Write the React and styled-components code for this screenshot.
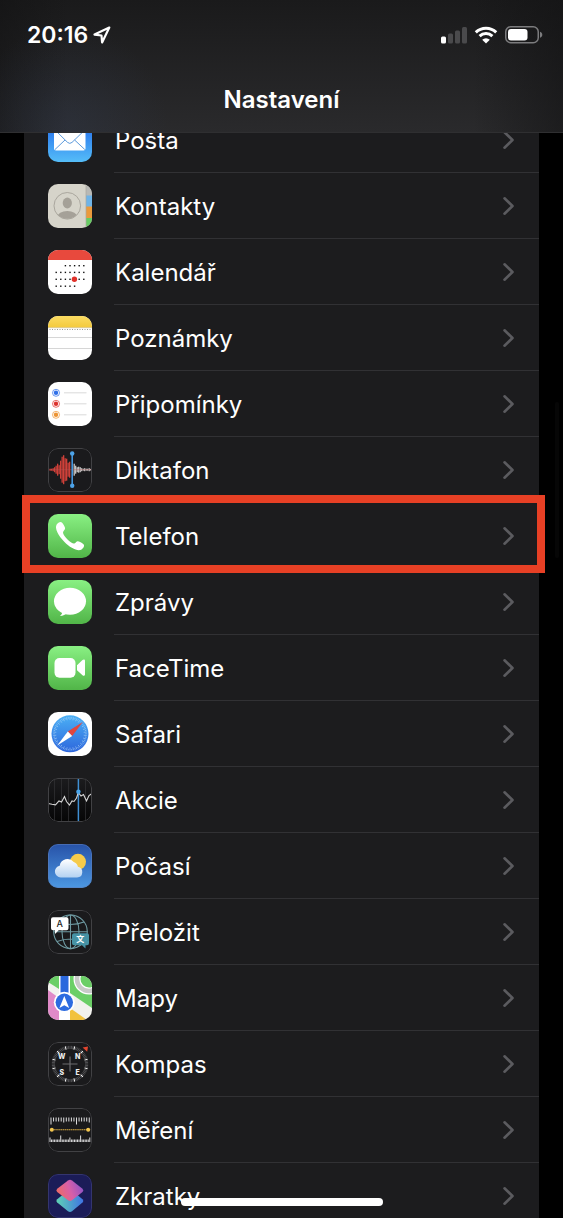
import React from "react";
import styled, { createGlobalStyle } from "styled-components";

const GlobalStyle = createGlobalStyle`
  * {
    box-sizing: border-box;
  }

  body {
    margin: 0;
    background: #000;
    color: #fff;
    font-family: Inter, "Liberation Sans", sans-serif;
  }
`;

const Screen = styled.div`
  position: relative;
  height: 100vh;
  display: flex;
  flex-direction: column;
  overflow: hidden;
  background: #000;
`;

const Header = styled.header`
  position: relative;
  z-index: 2;
  flex: none;
  border-bottom: 1px solid #2f2f31;
  background:
    radial-gradient(circle at 12% 95%, rgba(50, 62, 86, 0.3), transparent 100px),
    linear-gradient(90deg, rgba(18, 18, 19, 0.55), transparent 12%, transparent 84%, rgba(18, 18, 19, 0.55)),
    linear-gradient(#1a1a1b, #2a2a2c);
`;

const StatusBar = styled.div`
  display: flex;
  align-items: center;
  justify-content: space-between;
  height: 70px;
  padding: 0 20px 0 27px;
`;

const StatusGroup = styled.div`
  display: flex;
  align-items: center;
  gap: ${(p) => p.$gap}px;
`;

const Time = styled.time`
  font-size: 23px;
  line-height: 28px;
  font-weight: 600;
`;

const Title = styled.h1`
  margin: 0;
  padding: 13px 0 15px;
  font-size: 24px;
  line-height: 34px;
  font-weight: 600;
  text-align: center;
`;

const Content = styled.main`
  flex: 1;
  min-height: 0;
  padding: 0 24px;
`;

const List = styled.ul`
  list-style: none;
  margin: -26px 0 0;
  padding: 0;
  background: #1c1c1e;
`;

const Item = styled.li`
  position: relative;
`;

const Highlight = styled.div`
  position: absolute;
  z-index: 1;
  top: -8px;
  right: -6px;
  bottom: -4px;
  left: -2px;
  border: 8px solid #e84025;
  pointer-events: none;
`;

const RowLink = styled.a`
  display: flex;
  align-items: center;
  gap: 22px;
  height: 66px;
  padding-left: 24px;
  color: inherit;
  text-decoration: none;
`;

const AppIcon = styled.svg`
  flex: none;
  width: 44px;
  height: 44px;
  border-radius: 10px;
`;

const RowBody = styled.div`
  flex: 1;
  align-self: stretch;
  display: flex;
  align-items: center;
  justify-content: space-between;
  padding-right: 24px;
  border-bottom: 1px solid #313134;
`;

const Label = styled.span`
  padding: 2px 0 0 1px;
  font-size: 24px;
  line-height: 32px;
`;

const ScrollThumb = styled.div`
  position: absolute;
  top: 402px;
  right: 4px;
  width: 4px;
  height: 156px;
  border-radius: 2px;
  background: #060606;
`;

const HomeIndicator = styled.div`
  position: absolute;
  z-index: 3;
  bottom: 12px;
  left: 50%;
  width: 202px;
  height: 8px;
  border-radius: 4px;
  background: #fff;
  transform: translateX(-50%);
`;

const range = (n) => Array.from({ length: n }, (_, i) => i);

const Gradient = ({ id, from, to }) => (
  <linearGradient id={id} x1="0" y1="0" x2="0" y2="1">
    <stop offset="0" stopColor={from} />
    <stop offset="1" stopColor={to} />
  </linearGradient>
);

const Fill = ({ color }) => <rect width="44" height="44" fill={color} />;

const DarkTile = ({ children }) => (
  <>
    <Fill color="#1a1a1c" />
    {children}
    <rect x="0.5" y="0.5" width="43" height="43" rx="9.5" fill="none" stroke="#414144" />
  </>
);

const Mail = () => (
  <>
    <Gradient id="mail" from="#1d62ea" to="#55bdf8" />
    <Fill color="url(#mail)" />
    <rect x="6" y="11" width="31.5" height="21.5" rx="2" fill="#fff" />
    <path d="M7 12l12.6 12.4q2.2 2 4.4 0L36.8 12M7 31.5l10-9.5M36.8 31.5L26.6 22" fill="none" stroke="#4a8ed8" strokeWidth="0.9" />
  </>
);

const Contacts = () => (
  <>
    <Fill color="#d6d4ca" />
    <rect x="38" width="6" height="12" fill="#b9b9b5" />
    <rect x="38" y="11.5" width="6" height="11.5" fill="#6fb4e8" />
    <rect x="38" y="22.5" width="6" height="11.5" fill="#ea9a3c" />
    <rect x="38" y="34" width="6" height="10" fill="#67cc63" />
    <path d="M38 0v44" stroke="#a9a79e" strokeWidth="0.7" />
    <clipPath id="face"><circle cx="19.3" cy="21.8" r="13" /></clipPath>
    <g clipPath="url(#face)" fill="#a5a198">
      <ellipse cx="19.3" cy="19" rx="4.6" ry="5.4" />
      <ellipse cx="19.3" cy="33" rx="10" ry="6" />
    </g>
    <circle cx="19.3" cy="21.8" r="13.3" fill="none" stroke="#a5a198" strokeWidth="0.9" />
  </>
);

const calendarWeeks = [
  { y: 15.7, days: [2, 3, 4, 5, 6] },
  { y: 22.4, days: [0, 1, 2, 3, 4, 5, 6] },
  { y: 29.3, days: [0, 1, 2, 3, 5, 6] },
  { y: 36.2, days: [0, 1, 2, 3, 4] },
];

const Calendar = () => (
  <>
    <Fill color="#fff" />
    <rect width="44" height="10" fill="#e8493d" />
    {calendarWeeks.map((week) =>
      week.days.map((day) => (
        <rect key={`${week.y}-${day}`} x={7.5 + day * 4.6} y={week.y - 0.7} width="1.4" height="1.4" fill="#111" />
      ))
    )}
    <circle cx="26.4" cy="29.3" r="2.7" fill="#e0322a" />
  </>
);

const Notes = () => (
  <>
    <Gradient id="notes" from="#fbdc63" to="#f4ca3d" />
    <Fill color="#fff" />
    <rect width="44" height="11.5" fill="url(#notes)" />
    <path d="M0 11.7h44" stroke="#c9b676" strokeWidth="0.6" />
    <path d="M1.5 13.5h42" stroke="#999" strokeWidth="1" strokeDasharray="1 1.5" />
    <path d="M0 21.5h44M0 32.5h44" stroke="#cbcbcb" strokeWidth="0.8" />
  </>
);

const Reminders = () => (
  <>
    <Fill color="#fff" />
    {["#2f6fe8", "#dc322d", "#ec9434"].map((color, i) => (
      <g key={color} transform={`translate(8 ${10.8 + i * 11})`}>
        <circle r="3.5" fill="none" stroke={color} strokeWidth="0.7" />
        <circle r="2.2" fill={color} />
        <path d="M8 0h22.5" stroke="#cfcfcf" strokeWidth="0.8" />
      </g>
    ))}
  </>
);

const redBars = [1, 1, 1.5, 2.5, 4, 6, 4.5, 9, 13, 14.5, 11.5, 11, 7, 8];
const whiteBars = [6, 4, 2.5, 3, 2.5, 1.5, 1, 1.5, 1, 1, 1.5, 0.8];

const VoiceMemos = () => (
  <DarkTile>
    {redBars.map((h, i) => (
      <rect key={i} x={1.5 + i * 1.5} y={21.7 - h} width="1.3" height={h * 2} fill="#cf4039" />
    ))}
    {whiteBars.map((h, i) => (
      <rect key={i} x={25.6 + i * 1.5} y={21.7 - h} width="1.2" height={h * 2} fill="#d5d5d5" />
    ))}
    <path d="M1 21.7h42" stroke="#b55" strokeWidth="0.4" />
    <path d="M24.2 5.5v32" stroke="#4597dd" strokeWidth="1.6" />
    <circle cx="24.2" cy="5.5" r="2.2" fill="#4da3e8" />
    <circle cx="24.2" cy="37.8" r="2.2" fill="#4da3e8" />
  </DarkTile>
);

const GreenTile = ({ id, children }) => (
  <>
    <Gradient id={id} from="#89f083" to="#51b548" />
    <Fill color={`url(#${id})`} />
    {children}
  </>
);

const Phone = () => (
  <GreenTile id="phone">
    <path
      d="M8.8 10.3C10 8.4 12.6 7.2 13.9 8.5c1.4 1.5 2.8 3.9 3.2 5.4.4 1.7-2.2 3-2.1 4.6.1 2 2.800 5.400 5.300 7.700 2.200 1.900 4.400 3.500 6 3.200 1.500-.3 2.100-2.500 3.700-2.200 1.900.4 4.600 1.900 5.700 3.300 1.100 1.400-.5 4.100-2.600 5.200-3.600 1.700-11.100-1.700-16.600-7.600C10.500 21.700 6.100 14.400 8.800 10.300z"
      fill="#fff"
    />
  </GreenTile>
);

const Messages = () => (
  <GreenTile id="messages">
    <ellipse cx="22" cy="21.2" rx="16" ry="13.5" fill="#fff" />
    <path d="M14.5 30.500c.2 2.300-.8 4.100-2.700 5.600 3.200-.1 6-1.300 7.700-3.300z" fill="#fff" />
  </GreenTile>
);

const FaceTime = () => (
  <GreenTile id="facetime">
    <rect x="6.5" y="12" width="21" height="19.8" rx="5" fill="#fff" />
    <path d="M29 19.300l5.500-5.200c1.100-1 2.500-.7 2.500.9v13.300c0 1.600-1.400 1.900-2.500.9L29 24.300z" fill="#fff" />
  </GreenTile>
);

const Safari = () => (
  <>
    <Gradient id="safari" from="#4bb0f5" to="#2d66dc" />
    <Fill color="#fff" />
    <circle cx="22" cy="21.8" r="18.5" fill="url(#safari)" />
    {range(60).map((i) => (
      <path
        key={i}
        d={i % 2 ? "M22 5v1.6" : "M22 5v3"}
        transform={`rotate(${i * 6} 22 21.8)`}
        stroke="#b6dcfa"
        strokeWidth="0.5"
      />
    ))}
    <path d="M34.8 10L24.2 24 19.8 19.6z" fill="#e0463f" />
    <path d="M9.2 33.5L19.8 19.6 24.2 24z" fill="#fff" />
  </>
);

const Stocks = () => (
  <DarkTile>
    <Gradient id="stocks" from="#1c1c1e" to="#060606" />
    <Fill color="url(#stocks)" />
    <path d="M6.5 0v44M13.5 0v44M20.5 0v44M37.5 0v44" stroke="#303032" strokeWidth="0.8" />
    <path d="M30.4 0v44" stroke="#3f8fd2" strokeWidth="1.5" />
    <path
      d="M0 25.5L4 26.3 7.5 26.900 11 23 13.500 24 16.500 18.500 18.500 23.500 21.500 27 24 23 26 23.500 28.500 20 30.400 14.500 33 18 35.500 16.500 38.500 23 41 17.500 44 15.500"
      fill="none"
      stroke="#d6d6d6"
      strokeWidth="1.1"
    />
    <circle cx="30.4" cy="13.8" r="2.2" fill="#4aa6ec" />
  </DarkTile>
);

const Weather = () => (
  <>
    <Gradient id="sky" from="#2752a8" to="#4c98e2" />
    <Gradient id="cloud" from="#fff" to="#b4d2f2" />
    <Fill color="url(#sky)" />
    <circle cx="30" cy="17.8" r="8" fill="#f6cb4b" />
    <path
      d="M12.700 33.400a5.900 5.900 0 0 1-1-11.700 7.900 7.900 0 0 1 14-3.600 6.200 6.200 0 0 1 4.200 4.600 5.400 5.400 0 0 1-.8 10.700z"
      fill="url(#cloud)"
    />
    <rect x="0.5" y="0.5" width="43" height="43" rx="9.5" fill="none" stroke="#5c7dbb" strokeOpacity="0.6" />
  </>
);

const Translate = () => (
  <DarkTile>
    <g fill="none" stroke="#6f9ba3" strokeWidth="1.1">
      <circle cx="22.5" cy="21.8" r="16.8" />
      <ellipse cx="22.5" cy="21.8" rx="8.5" ry="16.8" />
      <path d="M22.5 5v34M5.700 21.800h33.600M9 12q13.500 5 27 0M9 31.500q13.500-5 27 0" />
    </g>
    <path d="M5 7.300h13.500a2 2 0 0 1 2 2v9a2 2 0 0 1-2 2h-7.800L7 24v-3.700H5a2 2 0 0 1-2-2v-9a2 2 0 0 1 2-2z" fill="#fff" />
    <path d="M26 23.200h13a2 2 0 0 1 2 2v8a2 2 0 0 1-2 2h-1.500v3.300l-3.500-3.300h-8a2 2 0 0 1-2-2v-8a2 2 0 0 1 2-2z" fill="#4692a4" />
    <text x="11.7" y="17" fontSize="9" fontWeight="500" textAnchor="middle" fill="#222">A</text>
    <text x="32.3" y="32.2" fontSize="8" fontWeight="700" textAnchor="middle" fill="#fff" fontFamily='"Noto Sans CJK SC", sans-serif'>文</text>
  </DarkTile>
);

const Maps = () => (
  <>
    <Fill color="#f2f2ee" />
    <path d="M0 0h11v13L0 6z" fill="#6bcf67" />
    <path d="M22 0h22v32L22 17z" fill="#6bcf67" />
    <path d="M0 14l11 8v22H0z" fill="#e08ac8" />
    <path d="M22 32l17 12H22z" fill="#f2c23d" />
    <circle cx="41" cy="3" r="12" fill="none" stroke="#fff" strokeWidth="7" />
    <circle cx="41" cy="3" r="12" fill="none" stroke="#c8cac8" strokeWidth="4.5" />
    <path d="M11 0h11v44h-11z" fill="#fff" />
    <path d="M12.500 0h8v26h-8z" fill="#2b68dd" />
    <circle cx="16.3" cy="26.3" r="10.5" fill="#fff" />
    <circle cx="16.3" cy="26.3" r="8.7" fill="#2c6be0" />
    <path d="M16.300 20l4.900 12-4.900-2.800-4.900 2.800z" fill="#fff" />
  </>
);

const compassLetters = [
  { name: "W", x: 13.7, y: 16.5 },
  { name: "N", x: 29.7, y: 16.5 },
  { name: "S", x: 13.7, y: 33 },
  { name: "E", x: 29.7, y: 33 },
];

const Compass = () => (
  <DarkTile>
    {range(72).map((i) => (
      <path
        key={i}
        d="M22 3.8v3.2"
        transform={`rotate(${i * 5} 22 22)`}
        stroke={i % 6 === 3 ? "#fff" : "#808083"}
        strokeWidth={i % 6 === 3 ? 1 : 0.5}
      />
    ))}
    <path d="M22 14.500v15M14.500 22h15" stroke="#6c6c6f" strokeWidth="1.2" />
    {compassLetters.map((l) => (
      <text key={l.name} x={l.x} y={l.y} fontSize="7" fontWeight="800" textAnchor="middle" fill="#eee">
        {l.name}
      </text>
    ))}
    <path d="M40 4.500l-.8 5.200-4.600-4.200z" fill="#e2452f" />
  </DarkTile>
);

const Measure = () => (
  <DarkTile>
    {range(16).map((i) => (
      <rect key={i} x={2.5 + i * 2.55} y="9.5" width="1" height={i % 10 === 0 ? 7 : i % 5 === 0 ? 5 : 4} fill="#dededf" />
    ))}
    {range(27).map((i) => (
      <rect
        key={i}
        x={1.5 + i * 1.53}
        y={i % 13 === 7 ? 27.5 : i % 13 === 0 ? 29.5 : 31.5}
        width="1"
        height={i % 13 === 7 ? 6.5 : i % 13 === 0 ? 4.5 : 2.5}
        fill="#dededf"
      />
    ))}
    <path d="M4 21.700h36" stroke="#dcae43" strokeWidth="1.1" strokeDasharray="1.6 0.5" />
    <circle cx="3.8" cy="21.7" r="2" fill="#f3c650" />
    <circle cx="40.2" cy="21.7" r="2" fill="#f3c650" />
  </DarkTile>
);

const Shortcuts = () => (
  <>
    <linearGradient id="diamondBottom" x1="0" y1="0.5" x2="1" y2="0.5">
      <stop offset="0" stopColor="#5fd2b4" />
      <stop offset="1" stopColor="#3f74e4" />
    </linearGradient>
    <linearGradient id="diamondTop" x1="0" y1="0.6" x2="1" y2="0.3">
      <stop offset="0" stopColor="#ee6b62" />
      <stop offset="0.5" stopColor="#d75fa8" />
      <stop offset="1" stopColor="#8d52c8" />
    </linearGradient>
    <Fill color="#1b1c58" />
    <path d="M20 16.500q2-1.500 4 0l10.500 8.700q1.800 1.700 0 3.300L24 37.200q-2 1.500-4 0L9.200 28.500q-1.800-1.600 0-3.300z" fill="url(#diamondBottom)" />
    <path d="M20 6.500q2-1.500 4 0l10.500 8.200q1.800 1.700 0 3.300L24 26.300q-2 1.500-4 0L9.200 18q-1.800-1.600 0-3.300z" fill="url(#diamondTop)" />
    <rect x="0.5" y="0.5" width="43" height="43" rx="9.5" fill="none" stroke="#34356f" />
  </>
);

const apps = [
  { name: "Pošta", Icon: Mail },
  { name: "Kontakty", Icon: Contacts },
  { name: "Kalendář", Icon: Calendar },
  { name: "Poznámky", Icon: Notes },
  { name: "Připomínky", Icon: Reminders },
  { name: "Diktafon", Icon: VoiceMemos },
  { name: "Telefon", Icon: Phone, highlighted: true },
  { name: "Zprávy", Icon: Messages },
  { name: "FaceTime", Icon: FaceTime },
  { name: "Safari", Icon: Safari },
  { name: "Akcie", Icon: Stocks },
  { name: "Počasí", Icon: Weather },
  { name: "Přeložit", Icon: Translate },
  { name: "Mapy", Icon: Maps },
  { name: "Kompas", Icon: Compass },
  { name: "Měření", Icon: Measure },
  { name: "Zkratky", Icon: Shortcuts },
];

const LocationArrow = () => (
  <svg width="18" height="18" viewBox="0 0 18 18" fill="none" aria-hidden="true">
    <path d="M16.300 1.600L1.500 8.600l7 .9.600 7z" stroke="#fff" strokeWidth="2.200" strokeLinejoin="round" />
  </svg>
);

const Signal = () => (
  <svg width="26" height="18" viewBox="0 0 26 18" aria-hidden="true">
    <rect x="0" y="10.5" width="5" height="7" rx="1.5" fill="#fff" />
    <rect x="7" y="7.5" width="5" height="10" rx="1.5" fill="#4a4a4c" />
    <rect x="14" y="4.5" width="5" height="13" rx="1.5" fill="#4a4a4c" />
    <rect x="21" y="1" width="5" height="16.5" rx="1.5" fill="#4a4a4c" />
  </svg>
);

const Wifi = () => (
  <svg width="24" height="18" viewBox="0 0 24 18" fill="none" aria-hidden="true">
    <path d="M1.800 6.400a14.600 14.600 0 0 1 20.400 0M5.600 10.200a9.200 9.200 0 0 1 12.800 0" stroke="#fff" strokeWidth="3" />
    <path d="M12 17.600l-3.800-3.900a5.400 5.400 0 0 1 7.600 0z" fill="#fff" />
  </svg>
);

const Battery = () => (
  <svg width="38" height="18" viewBox="0 0 38 18" aria-hidden="true">
    <rect x="0.75" y="0.75" width="32.5" height="16" rx="5" fill="none" stroke="#7c7c7e" strokeWidth="1.5" />
    <rect x="3" y="3" width="19.5" height="11.5" rx="3" fill="#fff" />
    <path d="M35 5.800c1.600.6 2.300 1.700 2.300 3s-.7 2.400-2.300 3z" fill="#7c7c7e" />
  </svg>
);

const Chevron = () => (
  <svg width="13" height="20" viewBox="0 0 13 20" fill="none" aria-hidden="true">
    <path d="M2.500 2.300L10.500 10l-8 7.700" stroke="#5b5b5f" strokeWidth="2.600" strokeLinecap="round" strokeLinejoin="round" />
  </svg>
);

const AppRow = ({ name, Icon, highlighted }) => (
  <Item>
    <RowLink href="#">
      <AppIcon viewBox="0 0 44 44" aria-hidden="true">
        <Icon />
      </AppIcon>
      <RowBody>
        <Label>{name}</Label>
        <Chevron />
      </RowBody>
    </RowLink>
    {highlighted && <Highlight />}
  </Item>
);

const App = () => (
  <>
    <GlobalStyle />
    <Screen>
      <Header>
        <StatusBar>
          <StatusGroup $gap={5}>
            <Time>20:16</Time>
            <LocationArrow />
          </StatusGroup>
          <StatusGroup $gap={7}>
            <Signal />
            <Wifi />
            <Battery />
          </StatusGroup>
        </StatusBar>
        <Title>Nastavení</Title>
      </Header>
      <Content>
        <List>
          {apps.map((app) => (
            <AppRow key={app.name} {...app} />
          ))}
        </List>
      </Content>
      <ScrollThumb />
      <HomeIndicator />
    </Screen>
  </>
);

export default App;
